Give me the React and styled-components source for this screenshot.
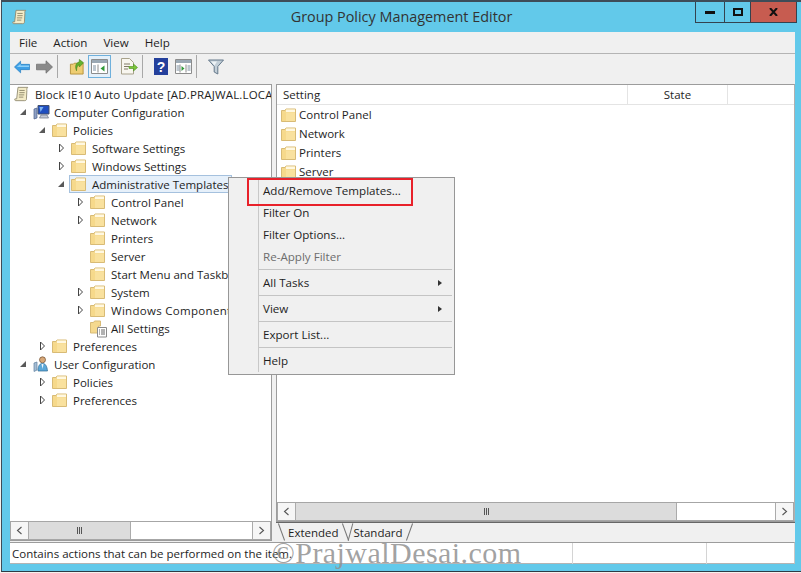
import React from "react";
import styled, { createGlobalStyle } from "styled-components";

const Global = createGlobalStyle`
  html, body { margin: 0; padding: 0; background: #f4f2ee; }
  body { font-family: "Open Sans", "Noto Sans", sans-serif; font-size: 11.5px; color: #1e1e1e; }
  * { box-sizing: border-box; }
`;

const Frame = styled.div`
  position: relative;
  width: 801px;
  height: 573px;
  overflow: hidden;
  padding-left: 1px;
`;
const Win = styled.div`
  height: 572px;
  background: #62c9ea;
  border-top: 2px solid #3e4c58;
  border-left: 1px solid #3e4c58;
  border-bottom: 1px solid #2f3a44;
  display: flex;
  flex-direction: column;
`;
const TitleBar = styled.div`
  height: 30px;
  flex: none;
  display: flex;
  align-items: flex-start;
  padding-left: 10px;
`;
const AppIcon = styled.div`
  width: 18px;
  height: 18px;
  margin-top: 7px;
`;
const TitleText = styled.div`
  flex: 1;
  text-align: center;
  font-size: 14.4px;
  line-height: 29px;
  color: #333;
  padding-left: 78px;
`;
const Controls = styled.div`
  display: flex;
  height: 21px;
  margin-right: 4px;
  border: 1px solid #34424e;
  border-top: none;
`;
const Ctl = styled.div`
  width: ${(p) => p.$w}px;
  display: flex;
  align-items: center;
  justify-content: center;
  background: ${(p) => (p.$close ? "#c75c50" : "transparent")};
  border-left: ${(p) => (p.$first ? "none" : "1px solid #34424e")};
`;
const Client = styled.div`
  flex: 1;
  margin: 0 6px 7px 8px;
  background: #f0f0f0;
  display: flex;
  flex-direction: column;
  min-height: 0;
`;
const MenuBar = styled.div`
  height: 22px;
  flex: none;
  display: flex;
  align-items: center;
  padding-left: 1px;
  border-bottom: 1px solid #b4b4b4;
`;
const MenuEntry = styled.div`
  padding: 0 8px;
  line-height: 22px;
  font-size: 11.6px;
`;
const ToolBar = styled.div`
  height: 30px;
  flex: none;
  display: flex;
  align-items: center;
  padding-left: 3px;
`;
const ToolBtn = styled.div`
  width: ${(p) => p.$w}px;
  height: 23px;
  display: flex;
  align-items: center;
  justify-content: ${(p) => (p.$end ? "flex-end" : "center")};
  padding-right: ${(p) => (p.$end ? 3 : 0)}px;
  margin-top: -5px;
  background: ${(p) => (p.$on ? "#e4f0fa" : "transparent")};
  border: 1px solid ${(p) => (p.$on ? "#6fb0dc" : "transparent")};
`;
const ToolSep = styled.div`
  width: 1px;
  height: 23px;
  margin: -5px 7px 0 0;
  background: #a8a8a8;
`;
const Panes = styled.div`
  flex: 1;
  min-height: 0;
  display: grid;
  grid-template-columns: 262px 1fr;
  column-gap: 4px;
`;
const TreePane = styled.div`
  display: flex;
  flex-direction: column;
  background: #fff;
  border: 1px solid #9c9c9c;
  border-left: none;
  min-height: 0;
`;
const TreeBody = styled.div`
  flex: 1;
  overflow: hidden;
`;
const Row = styled.div`
  height: 18px;
  display: flex;
  align-items: center;
  white-space: nowrap;
  padding-left: ${(p) => (p.$level === 0 ? 3 : p.$level * 19 - 11)}px;
`;
const Twisty = styled.div`
  width: 10px;
  height: 10px;
  flex: none;
  display: flex;
  align-items: center;
  justify-content: center;
  margin-right: 4px;
`;
const RowBody = styled.div`
  display: flex;
  align-items: center;
  height: 18px;
  padding: 0 3px 0 1px;
  margin-left: -1px;
  letter-spacing: ${(p) => p.$track || 0}px;
  background: ${(p) => (p.$sel ? "#e6f0fa" : "transparent")};
  border: 1px solid ${(p) => (p.$sel ? "#a5c1de" : "transparent")};
`;
const RowIcon = styled.div`
  width: 16px;
  height: 16px;
  flex: none;
  margin-right: 5px;
`;
const ListIcon = styled(RowIcon)`
  margin-right: 2px;
`;
const Scroll = styled.div`
  height: 19px;
  flex: none;
  display: flex;
  background: #fff;
  border: 1px solid #a6a6a6;
`;
const ScrollBtn = styled.div`
  width: 18px;
  flex: none;
  display: flex;
  align-items: center;
  justify-content: center;
  background: #f6f6f6;
  ${(p) => (p.$end ? "border-left: 1px solid #ababab; margin-left: auto;" : "border-right: 1px solid #ababab;")}
`;
const Thumb = styled.div`
  width: ${(p) => p.$w}px;
  flex: none;
  background: #dcdcdc;
  border-right: 1px solid #ababab;
  display: flex;
  align-items: center;
  justify-content: center;
  gap: 1px;
`;
const Grip = styled.span`
  width: 1px;
  height: 7px;
  background: #555;
`;
const ListSide = styled.div`
  display: flex;
  flex-direction: column;
  min-height: 0;
`;
const ListPane = styled.div`
  flex: 1;
  min-height: 0;
  background: #fff;
  border: 1px solid #9c9c9c;
  border-right: 1px solid #b0b0b0;
  display: flex;
  flex-direction: column;
`;
const ListHead = styled.div`
  height: 20px;
  flex: none;
  display: grid;
  grid-template-columns: 351px 100px 1fr;
  border-bottom: 1px solid #e4e4e4;
`;
const HeadCell = styled.div`
  padding-left: ${(p) => (p.$center ? 0 : 6)}px;
  line-height: 20px;
  text-align: ${(p) => (p.$center ? "center" : "left")};
  border-right: 1px solid #e4e4e4;
  &:last-child { border-right: none; }
`;
const ListBody = styled.div`
  flex: 1;
  overflow: hidden;
  padding-left: 4px;
`;
const ListRow = styled.div`
  height: 19px;
  display: flex;
  align-items: center;
`;
const TabStrip = styled.div`
  height: 19px;
  flex: none;
  display: flex;
  padding-left: 8px;
  background: #f0f0f0;
  border-top: 1px solid #666;
`;
const Tab = styled.div`
  position: relative;
  padding: 0 4px;
  margin-right: ${(p) => p.$mr || 0}px;
  line-height: 19px;
  &::before, &::after {
    content: "";
    position: absolute;
    top: 0;
    width: 1px;
    height: 18px;
    background: #777;
  }
  &::before { left: ${(p) => (p.$second ? 0 : -3)}px; transform: rotate(${(p) => (p.$second ? 15 : -20)}deg); }
  &::after { right: -3px; transform: rotate(${(p) => (p.$second ? 20 : -20)}deg); }
`;
const Status = styled.div`
  height: 22px;
  flex: none;
  display: grid;
  grid-template-columns: 563px 134px 1fr;
  background: #fff;
  border-top: 1px solid #9c9c9c;
  border-bottom: 1px solid #b4b4b4;
  border-right: 1px solid #c8c8c8;
  margin-top: 1px;
`;
const StatusCell = styled.div`
  padding-left: 2px;
  line-height: 21px;
  border-right: 1px solid #d4d4d4;
  &:last-child { border-right: none; }
`;
const Menu = styled.div`
  position: absolute;
  left: 228px;
  top: 177px;
  width: 227px;
  height: 198px;
  background: #f0f0f0;
  border: 1px solid #979797;
  padding: 2px 2px 2px 0;
  display: flex;
  flex-direction: column;
  font-size: 11.6px;
`;
const MenuRail = styled.div`
  position: absolute;
  left: 29px;
  top: 2px;
  bottom: 2px;
  width: 1px;
  background: #c8c8c8;
`;
const MenuRow = styled.div`
  height: 22px;
  flex: none;
  line-height: 22px;
  padding-left: 34px;
  display: flex;
  align-items: center;
  justify-content: space-between;
  padding-right: 10px;
  color: ${(p) => (p.$off ? "#6d6d6d" : "#1e1e1e")};
`;
const MenuSep = styled.div`
  height: 1px;
  flex: none;
  margin: 1px 0 2px 30px;
  background: #c4c4c4;
`;
const Caret = styled.span`
  width: 0;
  height: 0;
  border-left: 4px solid #333;
  border-top: 3.5px solid transparent;
  border-bottom: 3.5px solid transparent;
`;
const Highlight = styled.div`
  position: absolute;
  left: 247px;
  top: 178px;
  width: 166px;
  height: 28px;
  border: 2px solid #e8212a;
  pointer-events: none;
`;
const Watermark = styled.div`
  position: absolute;
  left: 272px;
  top: 535px;
  font-family: "Liberation Serif", serif;
  font-size: 30px;
  letter-spacing: 0.45px;
  line-height: 36px;
  color: rgba(145, 145, 145, 0.85);
  white-space: nowrap;
  pointer-events: none;
`;

const Folder = () => (
  <svg width="16" height="16" viewBox="0 0 16 16">
    <path d="M.5 3.500h3.500l1-1.500h9.500v12.500H.5z" fill="#f5d98e" stroke="#d8bb76" />
    <path d="M5 2.500h9v2.500H5z" fill="#fff8e2" />
    <path d="M1 5.500h13v8.500H1z" fill="#f9e19e" />
    <path d="M1 5.500h4v8.500H1z" fill="#f4d47f" opacity=".6" />
  </svg>
);
const SettingsIcon = () => (
  <svg width="18" height="18" viewBox="0 0 18 18">
    <path d="M.5 2.500h3l1-1.500h6v5h-2v7H.5z" fill="#f5d98e" stroke="#d8bb76" />
    <path d="M7.500 7.500h9v9.500h-9z" fill="#fff" stroke="#8a8a8a" />
    <path d="M9 10h1M11 10h4M9 12h1M11 12h4M9 14h1M11 14h4" stroke="#666" />
  </svg>
);
const ScrollDoc = () => (
  <svg width="16" height="16" viewBox="0 0 18 18">
    <path d="M4.500 1.500h11c-1.200 1-1.200 2.200-1 3.500l-.5 9.500c0 1.400-.8 2-2 2h-10c-1 0-1.500-1-1-2h2z" fill="#f4ecc8" stroke="#8f8a70" />
    <path d="M6 5h6M6 7.500h6M5.500 10h6M5.500 12.500h5" stroke="#8b8468" />
  </svg>
);
const ComputerIcon = () => (
  <svg width="17" height="16" viewBox="0 0 17 16">
    <path d="M1 5l3-1v10l-3 1z" fill="#8ea0c4" stroke="#4b5f8b" strokeWidth=".7" />
    <path d="M5 1.500h11v8.500H5z" fill="#1f4ec0" stroke="#44506c" />
    <path d="M6.500 3l4 0-3 5z" fill="#7fb4f0" />
    <path d="M8 11h6l1.500 3h-9z" fill="#c4c9d6" stroke="#6a7284" strokeWidth=".7" />
  </svg>
);
const UserIcon = () => (
  <svg width="17" height="16" viewBox="0 0 17 16">
    <path d="M1 7l3-1v8l-3 1.500z" fill="#a5bdd4" stroke="#5f7f9f" strokeWidth=".7" />
    <circle cx="9.500" cy="3.800" r="3" fill="#d8a878" stroke="#6c4a2c" strokeWidth=".7" />
    <path d="M5 15c0-5 1.500-7.500 4.500-7.500s4.500 2.500 5 7.500z" fill="#5ba7d8" stroke="#2f6a94" strokeWidth=".7" />
    <path d="M8.500 8h2l-1 5z" fill="#eef6fb" />
  </svg>
);
const Down = () => (
  <svg width="8" height="8" viewBox="0 0 8 8"><path d="M7 1v6H1z" fill="#595959" /></svg>
);
const Right = () => (
  <svg width="7" height="10" viewBox="0 0 7 10"><path d="M1.500 1l4 4-4 4z" fill="#fff" stroke="#444" /></svg>
);
const ChevL = () => (
  <svg width="7" height="9" viewBox="0 0 7 9"><path d="M5.500 1L1.500 4.500l4 3.500" fill="none" stroke="#555" strokeWidth="1.1" /></svg>
);
const ChevR = () => (
  <svg width="7" height="9" viewBox="0 0 7 9"><path d="M1.500 1l4 3.500-4 3.500" fill="none" stroke="#555" strokeWidth="1.1" /></svg>
);
const ArrowBack = () => (
  <svg width="17" height="14" viewBox="0 0 17 14"><path d="M.5 7L7 .8v3.400h9.500v5.600H7v3.400z" fill="#3d9fe6" stroke="#1d78bd" strokeWidth=".7" /><path d="M3 7l4-3.500v2h9V7z" fill="#8cd0f8" /></svg>
);
const ArrowFwd = () => (
  <svg width="17" height="14" viewBox="0 0 17 14"><path d="M16.500 7L10 .8v3.400H.5v5.600H10v3.400z" fill="#8a8a8a" stroke="#6a6a6a" strokeWidth=".7" /></svg>
);
const UpIcon = () => (
  <svg width="16" height="18" viewBox="0 0 17 18"><path d="M1.500 6h3l1-1h9.500v11.500H1.500z" fill="#eecd72" stroke="#b5923c" /><path d="M8 13c0-4 1-5.500 3-6.500V9l4.500-4.500L11 1v2.500C7.500 4.500 6 8 8 13z" fill="#63b32e" stroke="#3e7e16" strokeWidth=".6" /></svg>
);
const PaneIcon = ({ flip }) => (
  <svg width="17" height="15" viewBox="0 0 17 15">
    <path d="M.5 .5h16v14H.5z" fill="#fff" stroke="#8c8c8c" />
    <path d="M1 1h15v3H1z" fill="#9aa8b4" />
    {flip ? (
      <>
        <path d="M5 5.500v8" stroke="#8c8c8c" />
        <path d="M11 5.500v8" stroke="#8c8c8c" />
        <path d="M6.500 7l3 2.500-3 2.500z" fill="#2f9a3a" />
        <path d="M12.500 7h3M12.500 9h3M12.500 11h3M1.500 7h3M1.500 9h3M1.500 11h3" stroke="#7a8ea0" />
      </>
    ) : (
      <>
        <path d="M7 5.500v8" stroke="#8c8c8c" />
        <path d="M2 7h3M2 9h3M2 11h3" stroke="#7a8ea0" />
        <path d="M13.500 6.500l-4 3 4 3z" fill="#2f9a3a" />
      </>
    )}
  </svg>
);
const ExportIcon = () => (
  <svg width="18" height="17" viewBox="0 0 18 17">
    <path d="M1.500 .5h8l4 4v11.500h-12z" fill="#f8f6ef" stroke="#a8a28c" />
    <path d="M4 6h6M4 8.500h5M4 11h4" stroke="#807a64" />
    <path d="M9 8.500h4.500V6l4 3.500-4 3.500v-2.500H9z" fill="#7cc63a" stroke="#4a8e1e" strokeWidth=".6" />
  </svg>
);
const HelpIcon = () => (
  <svg width="14" height="17" viewBox="0 0 14 17">
    <path d="M0 0h14v17H0z" fill="#24409c" />
    <text x="7" y="14" textAnchor="middle" fontFamily="Liberation Sans, sans-serif" fontWeight="700" fontSize="14" fill="#fff">?</text>
  </svg>
);
const FilterIcon = () => (
  <svg width="16" height="16" viewBox="0 0 16 16">
    <path d="M.5 1h15L9.800 7.500V15l-3.600-2V7.500z" fill="#c3cfd8" stroke="#64788a" />
    <path d="M3 2.500h6l-2.500 4z" fill="#eef3f6" />
  </svg>
);

const folder = <Folder />;
const tree = [
  { level: 0, twisty: null, icon: <ScrollDoc />, text: "Block IE10 Auto Update [AD.PRAJWAL.LOCAL]", track: 0.16 },
  { level: 1, twisty: "d", icon: <ComputerIcon />, text: "Computer Configuration" },
  { level: 2, twisty: "d", icon: folder, text: "Policies" },
  { level: 3, twisty: "r", icon: folder, text: "Software Settings" },
  { level: 3, twisty: "r", icon: folder, text: "Windows Settings" },
  { level: 3, twisty: "d", icon: folder, text: "Administrative Templates", sel: true },
  { level: 4, twisty: "r", icon: folder, text: "Control Panel" },
  { level: 4, twisty: "r", icon: folder, text: "Network" },
  { level: 4, twisty: "n", icon: folder, text: "Printers" },
  { level: 4, twisty: "n", icon: folder, text: "Server" },
  { level: 4, twisty: "n", icon: folder, text: "Start Menu and Taskbar" },
  { level: 4, twisty: "r", icon: folder, text: "System" },
  { level: 4, twisty: "r", icon: folder, text: "Windows Components", track: 0.3 },
  { level: 4, twisty: "n", icon: <SettingsIcon />, text: "All Settings" },
  { level: 2, twisty: "r", icon: folder, text: "Preferences" },
  { level: 1, twisty: "d", icon: <UserIcon />, text: "User Configuration" },
  { level: 2, twisty: "r", icon: folder, text: "Policies" },
  { level: 2, twisty: "r", icon: folder, text: "Preferences" },
];

const ScrollBar = ({ thumb }) => (
  <Scroll>
    <ScrollBtn><ChevL /></ScrollBtn>
    <Thumb $w={thumb}><Grip /><Grip /><Grip /></Thumb>
    <ScrollBtn $end><ChevR /></ScrollBtn>
  </Scroll>
);

export default function App() {
  return (
    <Frame>
      <Global />
      <Win>
        <TitleBar>
          <AppIcon><ScrollDoc /></AppIcon>
          <TitleText>Group Policy Management Editor</TitleText>
          <Controls>
            <Ctl $w={28} $first>
              <svg width="10" height="3"><rect width="10" height="3" fill="#111" /></svg>
            </Ctl>
            <Ctl $w={26}>
              <svg width="10" height="8"><rect x="1" y="1" width="8" height="6" fill="none" stroke="#111" strokeWidth="2" /></svg>
            </Ctl>
            <Ctl $w={46} $close>
              <svg width="9" height="8"><path d="M1 0l7 8M8 0L1 8" stroke="#111" strokeWidth="2" /></svg>
            </Ctl>
          </Controls>
        </TitleBar>
        <Client>
          <MenuBar>
            <MenuEntry>File</MenuEntry>
            <MenuEntry>Action</MenuEntry>
            <MenuEntry>View</MenuEntry>
            <MenuEntry>Help</MenuEntry>
          </MenuBar>
          <ToolBar>
            <ToolBtn $w={18}><ArrowBack /></ToolBtn>
            <ToolBtn $w={26}><ArrowFwd /></ToolBtn>
            <ToolSep />
            <ToolBtn $w={23}><UpIcon /></ToolBtn>
            <ToolBtn $w={23} $on><PaneIcon /></ToolBtn>
            <ToolBtn $w={31} $end><ExportIcon /></ToolBtn>
            <ToolSep />
            <ToolBtn $w={21}><HelpIcon /></ToolBtn>
            <ToolBtn $w={25}><PaneIcon flip /></ToolBtn>
            <ToolSep />
            <ToolBtn $w={23}><FilterIcon /></ToolBtn>
          </ToolBar>
          <Panes>
            <TreePane>
              <TreeBody>
                {tree.map((r, i) => (
                  <Row key={i} $level={r.level}>
                    {r.twisty && (
                      <Twisty>
                        {r.twisty === "d" && <Down />}
                        {r.twisty === "r" && <Right />}
                      </Twisty>
                    )}
                    <RowBody $sel={r.sel} $track={r.track}>
                      <RowIcon>{r.icon}</RowIcon>
                      {r.text}
                    </RowBody>
                  </Row>
                ))}
              </TreeBody>
              <ScrollBar thumb={102} />
            </TreePane>
            <ListSide>
              <ListPane>
                <ListHead>
                  <HeadCell>Setting</HeadCell>
                  <HeadCell $center>State</HeadCell>
                  <HeadCell />
                </ListHead>
                <ListBody>
                  {["Control Panel", "Network", "Printers", "Server"].map((t) => (
                    <ListRow key={t}>
                      <ListIcon>{folder}</ListIcon>
                      {t}
                    </ListRow>
                  ))}
                </ListBody>
                <ScrollBar thumb={381} />
              </ListPane>
              <TabStrip>
                <Tab $mr={7}>Extended</Tab>
                <Tab $second>Standard</Tab>
              </TabStrip>
            </ListSide>
          </Panes>
          <Status>
            <StatusCell>Contains actions that can be performed on the item.</StatusCell>
            <StatusCell />
            <StatusCell />
          </Status>
        </Client>
      </Win>
      <Menu>
        <MenuRail />
        <MenuRow>Add/Remove Templates...</MenuRow>
        <MenuRow>Filter On</MenuRow>
        <MenuRow>Filter Options...</MenuRow>
        <MenuRow $off>Re-Apply Filter</MenuRow>
        <MenuSep />
        <MenuRow>All Tasks <Caret /></MenuRow>
        <MenuSep />
        <MenuRow>View <Caret /></MenuRow>
        <MenuSep />
        <MenuRow>Export List...</MenuRow>
        <MenuSep />
        <MenuRow>Help</MenuRow>
      </Menu>
      <Highlight />
      <Watermark>©PrajwalDesai.com</Watermark>
    </Frame>
  );
}
